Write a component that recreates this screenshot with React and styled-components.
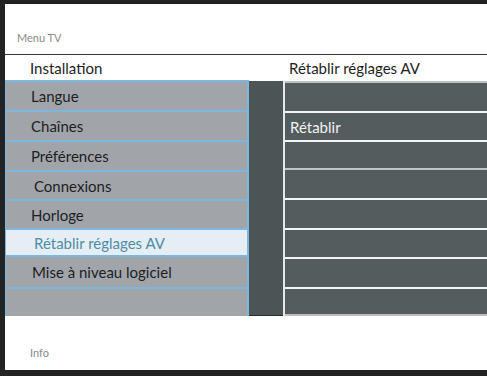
import React from "react";
import styled, { createGlobalStyle } from "styled-components";

const Global = createGlobalStyle`
  html, body { margin: 0; padding: 0; background: #ffffff; }
  body { font-family: Lato, "Open Sans", "DejaVu Sans", sans-serif; }
`;

const Frame = styled.div`
  width: 487px;
  height: 376px;
  box-sizing: border-box;
  border-top: 4px solid #232323;
  border-left: 5px solid #232323;
  border-bottom: 6px solid #232323;
  background: #ffffff;
  display: flex;
  flex-direction: column;
  overflow: hidden;
`;

const Header = styled.div`
  height: 51px;
  box-sizing: border-box;
  border-bottom: 1px solid #3a3a3a;
  display: flex;
  align-items: flex-end;
  padding: 0 0 10px 12px;
  font-size: 11px;
  color: #8a8a8a;
`;

const TitleRow = styled.div`
  height: 25px;
  display: flex;
  align-items: center;
  font-size: 15px;
  color: #1e1e1e;
`;

const TitleLeft = styled.div`
  width: 278px;
  padding-left: 25px;
  box-sizing: border-box;
`;

const TitleRight = styled.div`
  padding-left: 6px;
`;

const Body = styled.div`
  height: 236px;
  display: flex;
`;

const LeftPanel = styled.div`
  width: 244px;
  background: #a1a5aa;
  border-left: 1px solid #7db6df;
  border-right: 2px solid #7db6df;
  box-sizing: border-box;
  display: flex;
  flex-direction: column;
`;

const MenuItem = styled.div`
  height: ${(p) => p.$h}px;
  box-sizing: border-box;
  border-top: 2px solid #7db6df;
  display: flex;
  align-items: center;
  padding-left: ${(p) => p.$indent}px;
  font-size: 15px;
  color: ${(p) => (p.$active ? "#4e8da4" : "#1e1e1e")};
  background: ${(p) => (p.$active ? "#e5eef5" : "transparent")};
`;

const DarkCol = styled.div`
  width: 34px;
  background: #4d5455;
  border-bottom: 1px solid #2a2a2a;
  margin-top: 1px;
`;

const RightList = styled.div`
  flex: 1;
  display: flex;
  flex-direction: column;
  border-left: 2px solid #e8e8e8;
  margin-top: 1px;
`;

const OptionRow = styled.div`
  height: ${(p) => p.$h}px;
  box-sizing: border-box;
  border-top: 2px solid ${(p) => p.$line};
  background: #555c5d;
  display: flex;
  align-items: center;
  padding-left: 5px;
  font-size: 15px;
  color: #f2f2f2;
  &:last-child {
    border-bottom: 2px solid #bdbfbf;
  }
`;

const Footer = styled.div`
  flex: 1;
  display: flex;
  align-items: flex-end;
  padding: 0 0 11px 25px;
  font-size: 11px;
  color: #8a8a8a;
`;

const menu = [
  { label: "Langue", h: 30, indent: 25 },
  { label: "Chaînes", h: 30, indent: 25 },
  { label: "Préférences", h: 30, indent: 25 },
  { label: "Connexions", h: 29, indent: 28 },
  { label: "Horloge", h: 29, indent: 25 },
  { label: "Rétablir réglages AV", h: 27, indent: 28, active: true },
  { label: "Mise à niveau logiciel", h: 32, indent: 26 },
  { label: "", h: 29, indent: 25 },
];

const options = [
  { label: "", h: 30, line: "#bdbfbf" },
  { label: "Rétablir", h: 29, line: "#f4f4f4" },
  { label: "", h: 28, line: "#f4f4f4" },
  { label: "", h: 30, line: "#c2c4c4" },
  { label: "", h: 30, line: "#f4f4f4" },
  { label: "", h: 29, line: "#f4f4f4" },
  { label: "", h: 30, line: "#f4f4f4" },
  { label: "", h: 29, line: "#f4f4f4" },
];

export default function App() {
  return (
    <>
      <Global />
      <Frame>
        <Header>Menu TV</Header>
        <TitleRow>
          <TitleLeft>Installation</TitleLeft>
          <TitleRight>Rétablir réglages AV</TitleRight>
        </TitleRow>
        <Body>
          <LeftPanel>
            {menu.map((m, i) => (
              <MenuItem key={i} $h={m.h} $indent={m.indent} $active={m.active}>
                {m.label}
              </MenuItem>
            ))}
          </LeftPanel>
          <DarkCol />
          <RightList>
            {options.map((o, i) => (
              <OptionRow key={i} $h={o.h} $line={o.line}>
                {o.label}
              </OptionRow>
            ))}
          </RightList>
        </Body>
        <Footer>Info</Footer>
      </Frame>
    </>
  );
}
